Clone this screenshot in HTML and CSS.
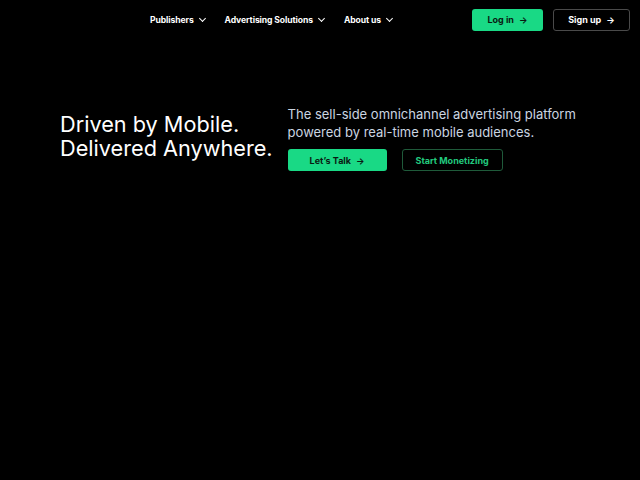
FILE: index.html
```html
<!DOCTYPE html>
<html lang="en">
<head>
<meta charset="UTF-8" />
<meta name="viewport" content="width=device-width, initial-scale=1" />
<title>Driven by Mobile</title>
<link rel="stylesheet" href="styles.css">
</head>
<body>

<header class="topbar">
  <nav class="main-nav">
    <a class="nav-item" href="#">Publishers <span class="chev"></span></a>
    <a class="nav-item" href="#">Advertising Solutions <span class="chev"></span></a>
    <a class="nav-item" href="#">About us <span class="chev"></span></a>
  </nav>
  <div class="auth">
    <a class="btn btn-green btn-nav" href="#">Log in <span class="arrow">&rarr;</span></a>
    <a class="btn btn-outline btn-nav btn-signup" href="#">Sign up <span class="arrow">&rarr;</span></a>
  </div>
</header>

<!-- Hero -->
<section class="hero">
  <h1 class="hero-title">Driven by Mobile.<br>Delivered Anywhere.</h1>
  <div class="hero-side">
    <p class="hero-text">The sell-side omnichannel advertising platform powered by real-time mobile audiences.</p>
    <div class="hero-actions">
      <a class="btn btn-green btn-talk" href="#">Let’s Talk <span class="arrow">&rarr;</span></a>
      <a class="btn btn-outline btn-monetize" href="#">Start Monetizing</a>
    </div>
  </div>
</section>

</body>
</html>
```

FILE: styles.css
```css
body {
  background: #000;
  color: #fff;
  font-family: Inter, 'Noto Sans', sans-serif;
  margin: 0;
  padding: 0;
}
a {
  text-decoration: none;
  color: inherit;
}
.topbar {
  display: flex;
  align-items: center;
  height: 39px;
  padding: 0 10px 0 150px;
}
.main-nav {
  display: flex;
  gap: 20px;
  flex: 1;
}
.nav-item {
  font-size: 8.6px;
  font-weight: 700;
  display: flex;
  align-items: center;
  gap: 6px;
  letter-spacing: -0.1px;
}
.chev {
  width: 4px;
  height: 4px;
  border-right: 1.3px solid #fff;
  border-bottom: 1.3px solid #fff;
  transform: rotate(45deg);
  margin-top: -3px;
}
.auth {
  display: flex;
  gap: 10px;
}
.btn {
  display: flex;
  align-items: center;
  justify-content: center;
  box-sizing: border-box;
  border-radius: 3px;
  font-size: 9px;
  font-weight: 700;
}
.arrow {
  margin-left: 5px;
  font-size: 9px;
}
.btn-green {
  background: #19d985;
  color: #0a1a12;
}
.btn-outline {
  border: 1px solid #3a3a3a;
  color: #fff;
}
.btn-nav {
  height: 22px;
  width: 71px;
}
.btn-signup {
  width: 77px;
  border-color: #4a4a4a;
}
.hero {
  display: flex;
  padding: 66px 0 0 60px;
  gap: 15px;
}
.hero-title {
  margin: 7px 0 0 0;
  font-size: 21.7px;
  font-weight: 400;
  line-height: 24px;
  letter-spacing: 0;
}
.hero-side {
  display: flex;
  flex-direction: column;
}
.hero-text {
  margin: 0;
  width: 293px;
  font-size: 13px;
  line-height: 18px;
  color: #cbd5e1;
}
.hero-actions {
  display: flex;
  gap: 15px;
  margin-top: 8px;
}
.btn-talk {
  width: 99px;
  height: 22px;
}
.btn-monetize {
  width: 101px;
  height: 22px;
  border-color: #1f5a3a;
  color: #22c97e;
}
```
